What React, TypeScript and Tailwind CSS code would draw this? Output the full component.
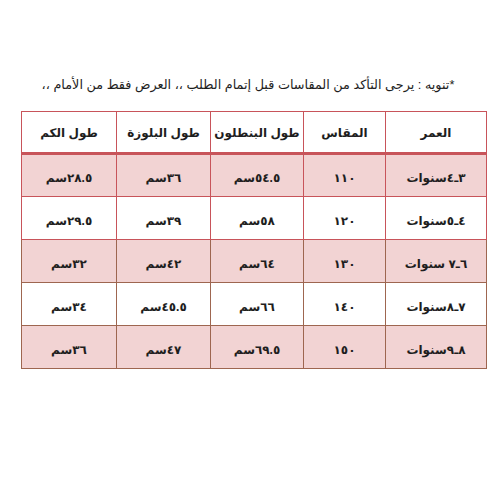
const headers = ['العمر', 'المقاس', 'طول البنطلون', 'طول البلوزة', 'طول الكم'];

const rows = [
  ['٣ـ٤سنوات', '١١٠', '٥٤.٥سم', '٣٦سم', '٢٨.٥سم'],
  ['٤ـ٥سنوات', '١٢٠', '٥٨سم', '٣٩سم', '٢٩.٥سم'],
  ['٦ـ٧ سنوات', '١٣٠', '٦٤سم', '٤٢سم', '٣٢سم'],
  ['٧ـ٨سنوات', '١٤٠', '٦٦سم', '٤٥.٥سم', '٣٤سم'],
  ['٨ـ٩سنوات', '١٥٠', '٦٩.٥سم', '٤٧سم', '٣٦سم'],
];

const widths = ['w-[101px]', 'w-[82px]', 'w-[93px]', 'w-[94px]', 'w-[95px]'];

export default function App() {
  return (
    <div
      dir="rtl"
      className="w-[500px] h-[500px] bg-white text-[#1e1e1e]"
      style={{ fontFamily: '"Liberation Sans", "DejaVu Sans", sans-serif' }}
    >
      <p className="pt-[76px] text-center text-[12.8px] leading-[18px] pr-[4px]">
        *تنويه : يرجى التأكد من المقاسات قبل إتمام الطلب ،، العرض فقط من الأمام ،،
      </p>

      <div className="pt-[17px] pr-[13px]">
        <table className="w-[465px] table-fixed border-collapse border-[1.5px] border-[#c8545a]">
          <colgroup>
            {widths.map((w, i) => (
              <col key={i} className={w} />
            ))}
          </colgroup>
          <thead>
            <tr className="h-[42px] border-b-[3px] border-[#c8545a]">
              {headers.map((h, i) => (
                <th
                  key={i}
                  className="border-x-[1.5px] border-[#c8545a] text-[12px] font-bold text-center whitespace-nowrap pt-[2px]"
                >
                  {h}
                </th>
              ))}
            </tr>
          </thead>
          <tbody>
            {rows.map((r, ri) => (
              <tr
                key={ri}
                className={`h-[43px] border-b-[1.5px] ${ri < 2 ? 'border-[#c8545a]' : 'border-[#9e6650]'} ${
                  ri % 2 === 0 ? 'bg-[#f2d3d3]' : 'bg-white'
                }`}
              >
                {r.map((c, ci) => (
                  <td
                    key={ci}
                    className={`border-x-[1.5px] ${ri < 2 ? 'border-[#c8545a]' : 'border-[#9e6650]'} text-[12px] font-semibold text-center whitespace-nowrap pt-[5px]`}
                  >
                    {c}
                  </td>
                ))}
              </tr>
            ))}
          </tbody>
        </table>
      </div>
    </div>
  );
}
